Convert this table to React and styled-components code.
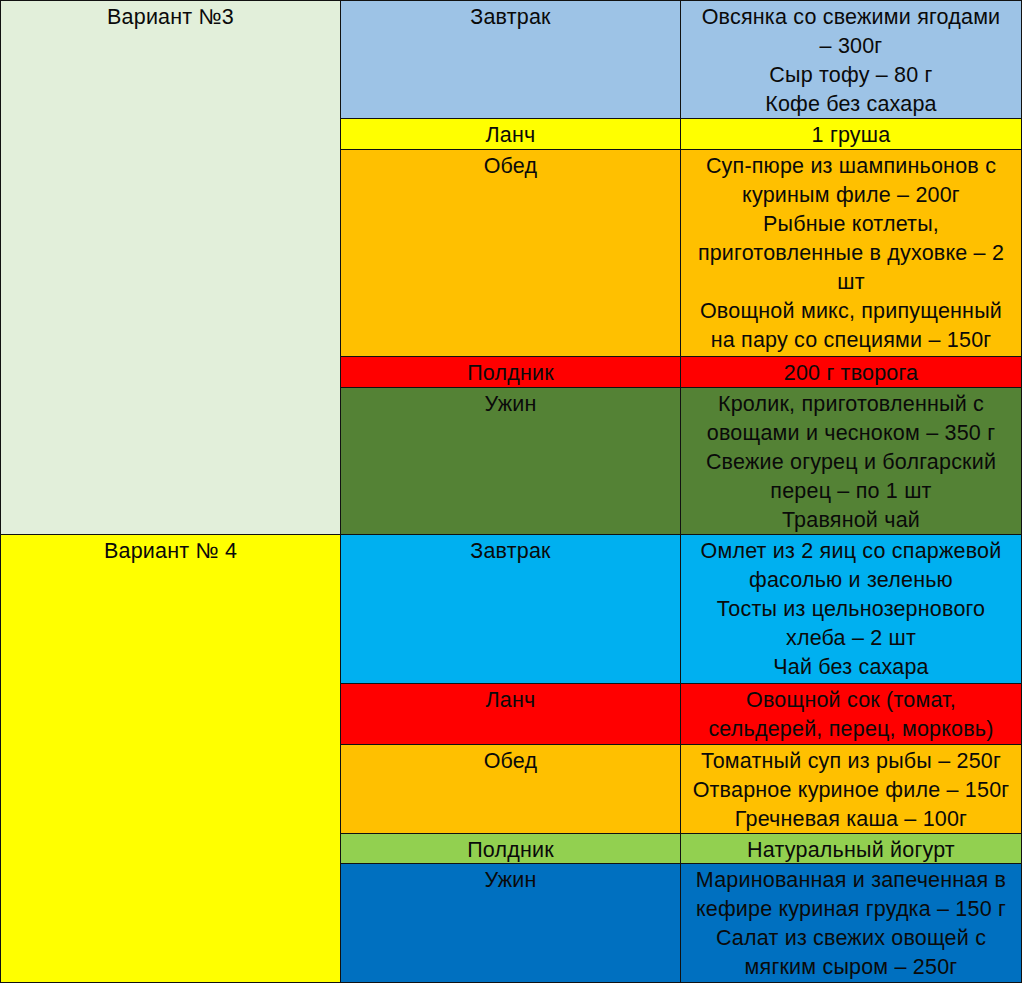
import React from 'react';
import styled, { createGlobalStyle } from 'styled-components';

const GlobalStyle = createGlobalStyle`
  html, body {
    margin: 0;
    padding: 0;
    background: #ffffff;
  }
  body {
    font-family: "Liberation Sans", Arial, sans-serif;
  }
`;

// row track heights (px) between the black grid lines
const rowHeights = [117, 30, 206, 30, 146, 148, 60, 88, 29, 118];

const variants = [
  {
    title: 'Вариант №3',
    color: '#E2EFDA',
    meals: [
      { name: 'Завтрак', color: '#9DC3E6', dish: ['Овсянка со свежими ягодами', '– 300г', 'Сыр тофу – 80 г', 'Кофе без сахара'] },
      { name: 'Ланч', color: '#FFFF00', dish: ['1 груша'] },
      {
        name: 'Обед',
        color: '#FFC000',
        dish: [
          'Суп-пюре из шампиньонов с',
          'куриным филе – 200г',
          'Рыбные котлеты,',
          'приготовленные в духовке – 2',
          'шт',
          'Овощной микс, припущенный',
          'на пару со специями – 150г',
        ],
      },
      { name: 'Полдник', color: '#FF0000', dish: ['200 г творога'] },
      {
        name: 'Ужин',
        color: '#548235',
        dish: [
          'Кролик, приготовленный с',
          'овощами и чесноком – 350 г',
          'Свежие огурец и болгарский',
          'перец – по 1 шт',
          'Травяной чай',
        ],
      },
    ],
  },
  {
    title: 'Вариант № 4',
    color: '#FFFF00',
    meals: [
      {
        name: 'Завтрак',
        color: '#00B0F0',
        dish: [
          'Омлет из 2 яиц со спаржевой',
          'фасолью и зеленью',
          'Тосты из цельнозернового',
          'хлеба – 2 шт',
          'Чай без сахара',
        ],
      },
      { name: 'Ланч', color: '#FF0000', dish: ['Овощной сок (томат,', 'сельдерей, перец, морковь)'] },
      {
        name: 'Обед',
        color: '#FFC000',
        dish: ['Томатный суп из рыбы – 250г', 'Отварное куриное филе – 150г', 'Гречневая каша – 100г'],
      },
      { name: 'Полдник', color: '#92D050', dish: ['Натуральный йогурт'] },
      {
        name: 'Ужин',
        color: '#0070C0',
        dish: [
          'Маринованная и запеченная в',
          'кефире куриная грудка – 150 г',
          'Салат из свежих овощей с',
          'мягким сыром – 250г',
        ],
      },
    ],
  },
];

const Table = styled.div`
  display: grid;
  grid-template-columns: 339px 339px 340px;
  grid-template-rows: ${rowHeights.map((h) => `${h}px`).join(' ')};
  gap: 1px;
  padding: 1px;
  width: max-content;
  background: #111111;
  color: #0a0a0a;
  font-size: 21.5px;
  letter-spacing: 0.2px;
  line-height: 29px;
`;

const Cell = styled.div`
  background: ${(p) => p.$bg};
  text-align: center;
  padding-top: 2px;
  white-space: nowrap;
  overflow: hidden;
`;

const VariantCell = styled(Cell)`
  grid-column: 1;
  grid-row: ${(p) => p.$start} / span ${(p) => p.$span};
`;

const MealCell = styled(Cell)`
  grid-column: 2;
`;

const DishCell = styled(Cell)`
  grid-column: 3;
`;

const Line = styled.div``;

export default function App() {
  let row = 1;
  return (
    <>
      <GlobalStyle />
      <Table>
        {variants.map((v) => {
          const start = row;
          row += v.meals.length;
          return (
            <React.Fragment key={v.title}>
              <VariantCell $bg={v.color} $start={start} $span={v.meals.length}>
                {v.title}
              </VariantCell>
              {v.meals.map((m) => (
                <React.Fragment key={v.title + m.name}>
                  <MealCell $bg={m.color}>{m.name}</MealCell>
                  <DishCell $bg={m.color}>
                    {m.dish.map((d) => (
                      <Line key={d}>{d}</Line>
                    ))}
                  </DishCell>
                </React.Fragment>
              ))}
            </React.Fragment>
          );
        })}
      </Table>
    </>
  );
}
